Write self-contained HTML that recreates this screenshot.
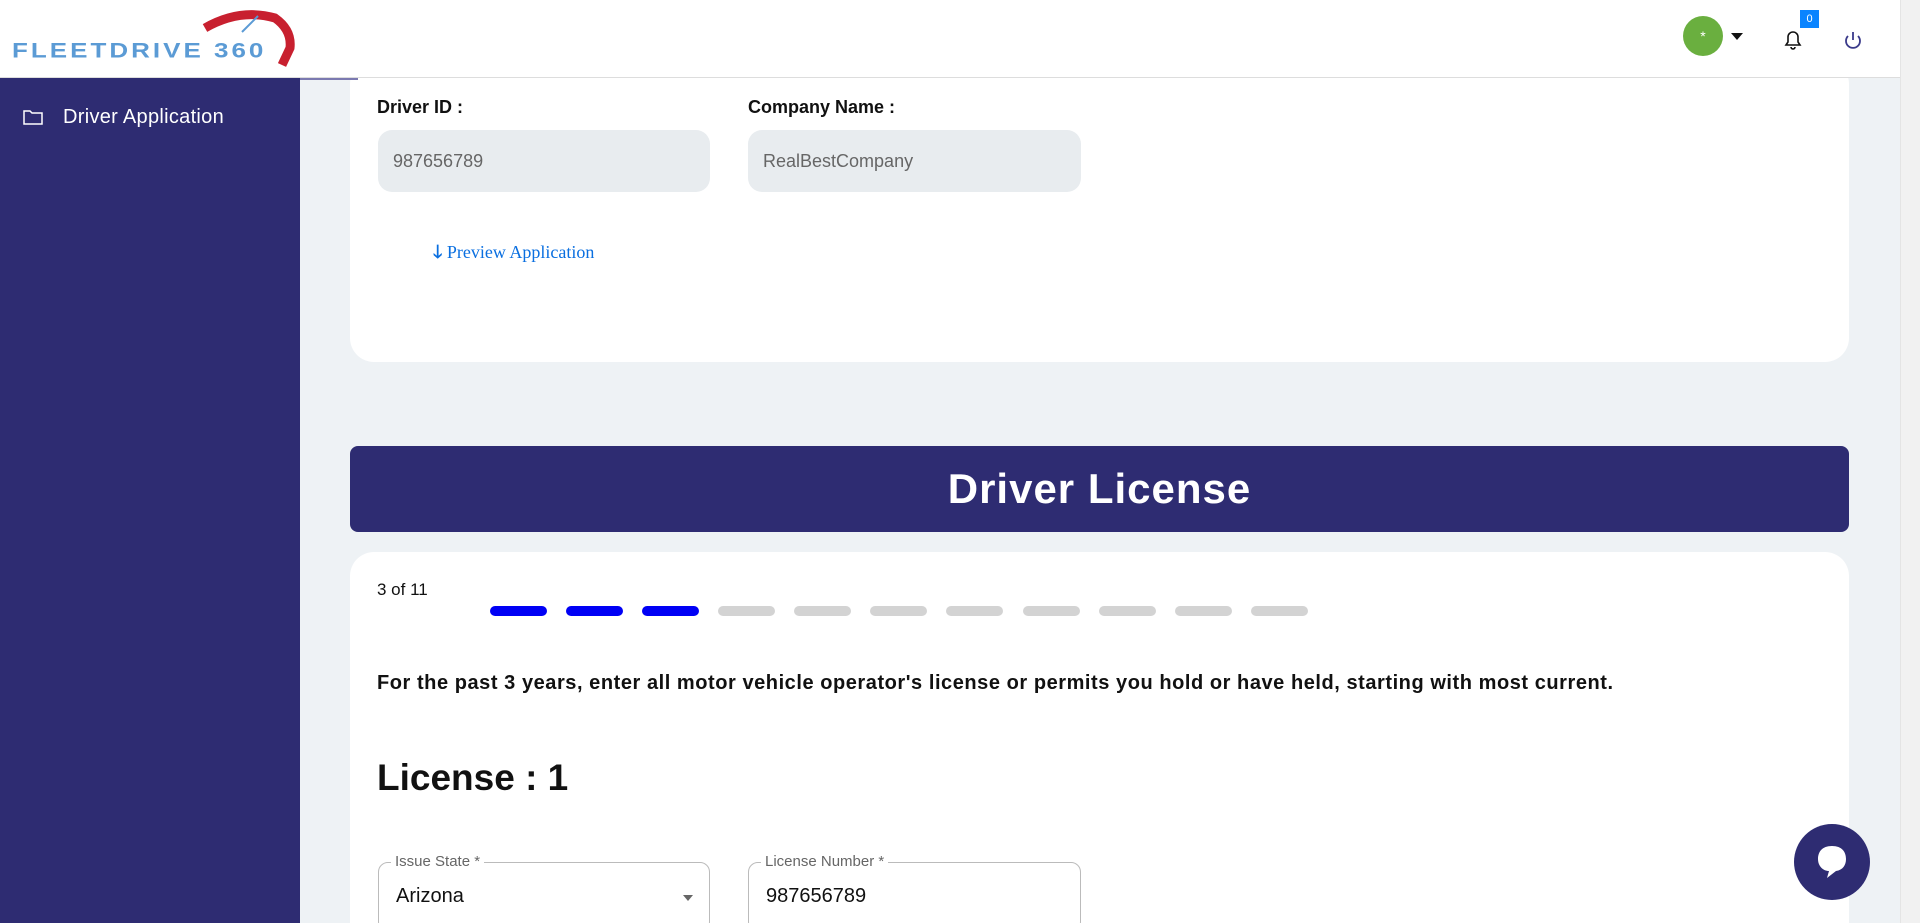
<!DOCTYPE html>
<html style="overflow:hidden;height:923px"><head><meta charset="utf-8"><style>
*{box-sizing:border-box;margin:0;padding:0}
body{width:1920px;height:923px;overflow:hidden;background:#eef2f5;font-family:"Liberation Sans",sans-serif;position:relative}
.hdr{position:absolute;left:0;top:0;width:1900px;height:78px;background:#fff;border-bottom:1px solid #ddd;z-index:2}
.side{position:absolute;left:0;top:78px;width:300px;height:845px;background:#2e2c72;z-index:2}
.scroll{position:absolute;left:1900px;top:0;width:20px;height:923px;background:#f1f1f1;border-left:1px solid #e4e4e4}
.card{position:absolute;background:#fff;border-radius:24px}
.lbl{position:absolute;font-weight:bold;font-size:18px;color:#111}
.inp{position:absolute;background:#e8ecef;border-radius:14px;height:62px;color:#666;font-size:18px;padding:21px 15px}
.bar{position:absolute;top:606px;width:57px;height:10px;border-radius:5px}
.of{position:absolute;border:1px solid #bbb;border-radius:10px;height:70px}
.fl{position:absolute;top:-10px;left:12px;background:#fff;padding:0 4px;font-size:15px;color:#666}
</style></head><body>
<div class="hdr">
 <div style="position:absolute;left:12px;top:35px;font-size:26px;font-weight:bold;color:#5b9bd5;letter-spacing:3px;transform:scaleY(0.8)">FLEETDRIVE 360</div>
 <svg style="position:absolute;left:200px;top:10px" width="95" height="60"><path d="M5 18 Q40 -2 75 8 Q92 20 90 38 L82 55" stroke="#c8202f" stroke-width="9" fill="none"/><line x1="42" y1="22" x2="58" y2="6" stroke="#5b9bd5" stroke-width="2"/></svg>
 <div style="position:absolute;left:1683px;top:16px;width:40px;height:40px;border-radius:50%;background:#6aaf3f;color:#fff;text-align:center;line-height:40px;font-size:14px">*</div>
 <div style="position:absolute;left:1731px;top:33px;border:6px solid transparent;border-top:7px solid #111"></div>
 <svg style="position:absolute;left:1783px;top:29px" width="20" height="22"><path d="M3 16 L5 13 V8 A5 5 0 0 1 15 8 V13 L17 16 Z M8 18 A2 2 0 0 0 12 18" stroke="#111" stroke-width="1.6" fill="none"/></svg>
 <div style="position:absolute;left:1800px;top:10px;width:19px;height:18px;background:#0a84ff;color:#fff;font-size:11px;text-align:center;line-height:18px">0</div>
 <svg style="position:absolute;left:1843px;top:30px" width="20" height="22"><path d="M5 6 A7 7 0 1 0 15 6 M10 2 V10" stroke="#3a3a8a" stroke-width="1.8" fill="none"/></svg>
</div>
<div style="position:absolute;left:300px;top:78px;width:58px;height:2px;background:#7b79b0;z-index:3"></div>
<div class="side">
 <svg style="position:absolute;left:23px;top:31px" width="20" height="16"><path d="M1 2 H7 L9 4 H19 V15 H1 Z" stroke="#fff" stroke-width="1.5" fill="none"/></svg>
 <div style="position:absolute;left:63px;top:28px;color:#fff;font-size:20px;letter-spacing:0.3px">Driver Application</div>
</div>
<div class="scroll"></div>
<div class="card" style="left:350px;top:60px;width:1499px;height:302px"></div>
<div class="lbl" style="left:377px;top:97px">Driver ID :</div>
<div class="lbl" style="left:748px;top:97px">Company Name :</div>
<div class="inp" style="left:378px;top:130px;width:332px">987656789</div>
<div class="inp" style="left:748px;top:130px;width:333px">RealBestCompany</div>
<div style="position:absolute;left:433px;top:240px;color:#0a6fe0;font-family:'Liberation Serif',serif;font-size:18px"><b>🡓</b> Preview Application</div>
<div style="position:absolute;left:350px;top:446px;width:1499px;height:86px;background:#2e2c72;border-radius:8px;color:#fff;font-size:42px;font-weight:bold;text-align:center;line-height:86px;letter-spacing:1px">Driver License</div>
<div class="card" style="left:350px;top:552px;width:1499px;height:371px;border-bottom-left-radius:0;border-bottom-right-radius:0"></div>
<div style="position:absolute;left:377px;top:580px;font-size:17px;color:#111">3 of 11</div>
<div class="bar" style="left:490px;background:#0000f5"></div>
<div class="bar" style="left:566px;background:#0000f5"></div>
<div class="bar" style="left:642px;background:#0000f5"></div>
<div class="bar" style="left:718px;background:#d3d3d3"></div>
<div class="bar" style="left:794px;background:#d3d3d3"></div>
<div class="bar" style="left:870px;background:#d3d3d3"></div>
<div class="bar" style="left:946px;background:#d3d3d3"></div>
<div class="bar" style="left:1023px;background:#d3d3d3"></div>
<div class="bar" style="left:1099px;background:#d3d3d3"></div>
<div class="bar" style="left:1175px;background:#d3d3d3"></div>
<div class="bar" style="left:1251px;background:#d3d3d3"></div>
<div style="position:absolute;left:377px;top:672px;font-size:20px;font-weight:bold;color:#111;letter-spacing:0.55px;white-space:nowrap">For the past 3 years, enter all motor vehicle operator's license or permits you hold or have held, starting with most current.</div>
<div style="position:absolute;left:377px;top:757px;font-size:37px;font-weight:bold;color:#111">License : 1</div>
<div class="of" style="left:378px;top:862px;width:332px"><span class="fl">Issue State *</span><span style="position:absolute;left:17px;top:22px;font-size:20px;color:#111">Arizona</span><span style="position:absolute;right:16px;top:32px;border:5px solid transparent;border-top:6px solid #666"></span></div>
<div class="of" style="left:748px;top:862px;width:333px"><span class="fl">License Number *</span><span style="position:absolute;left:17px;top:22px;font-size:20px;color:#111">987656789</span></div>
<div style="position:absolute;left:1794px;top:824px;width:76px;height:76px;border-radius:50%;background:#2e2c72"></div>
<svg style="position:absolute;left:1814px;top:842px" width="36" height="40"><path d="M18 4 C8 4 4 10 4 17 C4 24 9 29 15 29 L13 36 L22 29 C29 28 32 23 32 17 C32 10 28 4 18 4 Z" fill="#fff"/></svg>
</body></html>
